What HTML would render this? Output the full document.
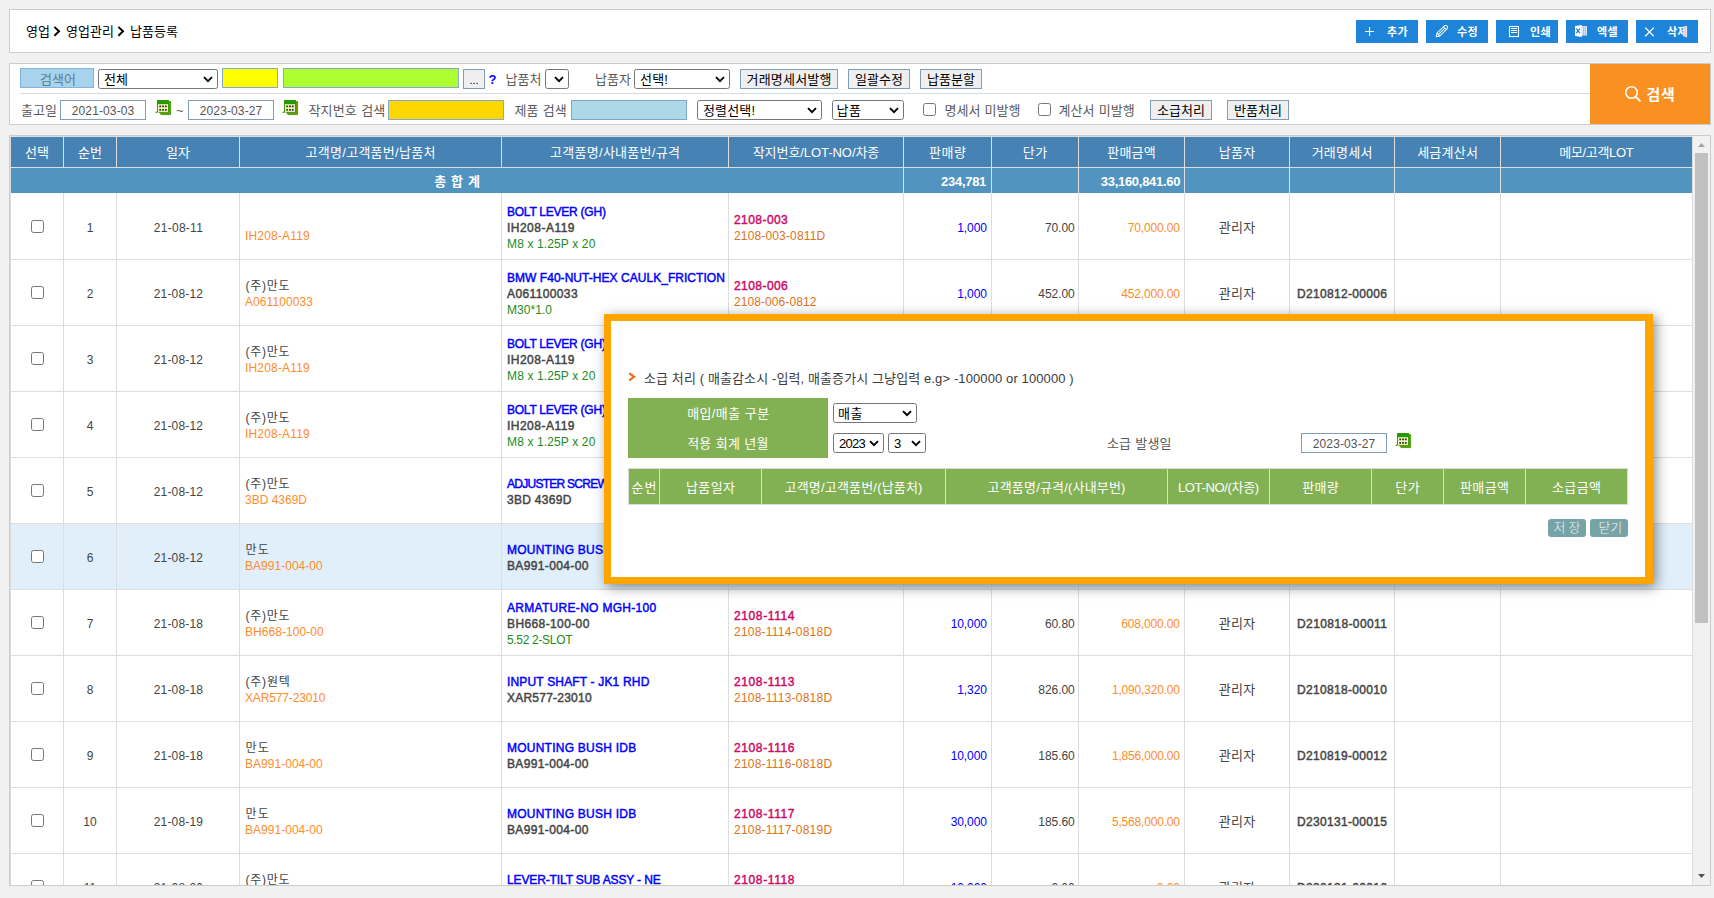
<!DOCTYPE html><html lang="ko"><head><meta charset="utf-8"><title>납품등록</title><style>
*{box-sizing:border-box;margin:0;padding:0}
html,body{width:1714px;height:898px;overflow:hidden}
body{background:#f1f1f1;font-family:"Liberation Sans","Noto Sans CJK KR",sans-serif;font-size:12px;color:#333;position:relative}
.abs{position:absolute}
.panel{position:absolute;background:#fff;border:1px solid #ccc}
.t{position:absolute;white-space:nowrap;line-height:16px}
.t i{font-style:normal;display:inline-block;white-space:nowrap}
.bc{font-size:13px;color:#000}
.tb{position:absolute;top:20px;width:62px;height:23px;background:#1d84d9}
.tbt{color:#fff;font-size:11px;font-weight:bold}
.lbl{font-size:13px;color:#5a5a5a;word-spacing:0.4px}
.inp{position:absolute;height:20px;border:1px solid #7f9db9;background:#fff}
.inpt{font-size:12px;color:#555}
.sel{position:absolute;height:20px;border:1px solid #767676;border-radius:2.5px;background:#fff}
.selt{font-size:13px;color:#000}
.btn{position:absolute;height:20px;border:1px solid #7f9db9;background:#efefef}
.btnt{font-size:13px;color:#000}
.cb{position:absolute;width:13px;height:13px;border:1px solid #767676;border-radius:2.5px;background:#fff}
.th{position:absolute;top:137px;height:30px;background:#4682b4}
.tht{color:#fff;font-size:13px}
.tt{position:absolute;top:168px;height:25px;background:#5294c0}
.ttt{color:#fff;font-size:13px;font-weight:bold;word-spacing:1px}
.vl{position:absolute;width:1px;background:#ddd}
.hl{position:absolute;height:1px;background:#ddd}
.c{font-size:12px;color:#444}
.org{color:#ff8c2a}
.blu{color:#0000ff}
.bb{color:#0000ff;-webkit-text-stroke:0.45px #0000ff}
.dk{color:#444;-webkit-text-stroke:0.45px #444}
.grn{color:#228b22}
.lot{color:#cc0a66;-webkit-text-stroke:0.45px #cc0a66}
.lot2{color:#e0701c}
.gth{position:absolute;background:#82b154}
.gtt{color:#fff;font-size:13px;word-spacing:0.4px}
.mb{position:absolute;top:519px;height:18px;width:38px;background:#76a3a6;border-radius:3px}
.mbt{color:#eef5f5;font-size:13px;font-weight:300}
</style></head><body>
<div class="panel" style="left:9px;top:9px;width:1702px;height:44px"></div>
<div class="t bc" style="left:26px;top:24px;"><i style="letter-spacing:-0.01px;">영업</i></div>
<div class="t bc" style="left:66px;top:24px;"><i style="letter-spacing:0.01px;">영업관리</i></div>
<div class="t bc" style="left:130px;top:24px;"><i style="letter-spacing:0.01px;">납품등록</i></div>
<svg class="abs" style="left:53px;top:26px" width="8" height="11" viewBox="0 0 8 11"><path d="M1.4 0.9 L6 5.3 L1.4 9.7" fill="none" stroke="#000" stroke-width="2"/></svg>
<svg class="abs" style="left:117px;top:26px" width="8" height="11" viewBox="0 0 8 11"><path d="M1.4 0.9 L6 5.3 L1.4 9.7" fill="none" stroke="#000" stroke-width="2"/></svg>
<div class="tb" style="left:1356px"><svg class="abs" style="left:8px;top:6px" width="12" height="12" viewBox="0 0 12 12"><path d="M5.6 1v9M1.1 5.5h9" stroke="#fff" stroke-width="1.1" fill="none"/></svg></div>
<div class="t tbt" style="left:1387px;top:24px;"><i style="letter-spacing:0.32px;">추가</i></div>
<div class="tb" style="left:1426px"><svg class="abs" style="left:9px;top:5px" width="13" height="13" viewBox="0 0 13 13"><g transform="translate(6.6,6.4) rotate(-44.5)" fill="none" stroke="#fff" stroke-width="0.95"><path d="M-7.6 0 L-4.6 -2 H5.6 a2 2 0 0 1 0 4 H-4.6 Z"/><path d="M-4.6 0 H5.2M-4.6 -2 V2M4.6 -2 V2"/></g></svg></div>
<div class="t tbt" style="left:1457px;top:24px;"><i style="letter-spacing:0.32px;">수정</i></div>
<div class="tb" style="left:1496px"><svg class="abs" style="left:12px;top:5px" width="12" height="13" viewBox="0 0 12 13"><rect x="1.5" y="1.5" width="9" height="10" stroke="#fff" stroke-width="1.1" fill="none"/><path d="M3 3.5h6M3 5.5h6M3 7.5h6" stroke="#fff" stroke-width="1"/></svg></div>
<div class="t tbt" style="left:1530px;top:24px;"><i style="letter-spacing:0.32px;">인쇄</i></div>
<div class="tb" style="left:1566px"><svg class="abs" style="left:8px;top:5px" width="14" height="13" viewBox="0 0 14 13"><rect x="7.5" y="1" width="5.5" height="9.5" fill="#d9e8f9"/><path d="M9.6 1.5v8.5M11.3 1.5v8.5" stroke="#8fbcec" stroke-width="0.8"/><path d="M1 1.1 L7.8 0 V12.1 L1 11 Z" fill="#fff"/><path d="M2.3 3.7 L5.9 8.1 M5.9 3.7 L2.3 8.1" stroke="#1d84d9" stroke-width="1.3"/></svg></div>
<div class="t tbt" style="left:1597px;top:24px;"><i style="letter-spacing:0.32px;">엑셀</i></div>
<div class="tb" style="left:1636px"><svg class="abs" style="left:8px;top:6px" width="12" height="12" viewBox="0 0 12 12"><path d="M1.2 1.6 L9.8 10.2 M9.8 1.6 L1.2 10.2" stroke="#fff" stroke-width="1.3" fill="none"/></svg></div>
<div class="t tbt" style="left:1667px;top:24px;"><i style="letter-spacing:0.32px;">삭제</i></div>
<div class="panel" style="left:9px;top:63px;width:1702px;height:62px"></div>
<div class="abs" style="left:20px;top:93px;width:1570px;height:1px;background:#d3dbe3"></div>
<div class="abs" style="left:20px;top:68px;width:74px;height:20px;background:#a8d3ec;border:1px solid #86b3d9"></div>
<div class="t " style="left:40px;top:72px;font-size:13px;color:#5c7d97"><i style="letter-spacing:0.00px;">검색어</i></div>
<div class="sel" style="left:98px;top:69px;width:120px"><svg class="abs" style="right:4px;top:6px" width="10" height="7" viewBox="0 0 10 7"><path d="M1 1.2 L5 5.2 L9 1.2" fill="none" stroke="#000" stroke-width="1.9"/></svg></div>
<div class="t selt" style="left:104px;top:72px;"><i style="letter-spacing:-0.01px;">전체</i></div>
<div class="inp" style="left:222px;top:68px;width:56px;background:#ffff00;border-color:#86a9d4"></div>
<div class="inp" style="left:283px;top:68px;width:176px;background:#adff2f;border-color:#86a9d4"></div>
<div class="btn" style="left:463px;top:69px;width:22px"></div>
<div class="t " style="left:274px;width:400px;text-align:center;top:72px;font-size:11px;color:#000"><i style="">...</i></div>
<div class="t " style="left:488.5px;top:72px;color:#0000ff;font-weight:bold;font-size:13px"><i style="">?</i></div>
<div class="t lbl" style="left:505.5px;top:72px;"><i style="letter-spacing:0.00px;">납품처</i></div>
<div class="sel" style="left:545px;top:69px;width:24px"><svg class="abs" style="right:4px;top:6px" width="10" height="7" viewBox="0 0 10 7"><path d="M1 1.2 L5 5.2 L9 1.2" fill="none" stroke="#000" stroke-width="1.9"/></svg></div>
<div class="t lbl" style="left:595px;top:72px;"><i style="letter-spacing:0.00px;">납품자</i></div>
<div class="sel" style="left:634px;top:69px;width:96px"><svg class="abs" style="right:4px;top:6px" width="10" height="7" viewBox="0 0 10 7"><path d="M1 1.2 L5 5.2 L9 1.2" fill="none" stroke="#000" stroke-width="1.9"/></svg></div>
<div class="t selt" style="left:640px;top:72px;"><i style="letter-spacing:0.17px;">선택!</i></div>
<div class="btn" style="left:740px;top:69px;width:98px"></div>
<div class="t btnt" style="left:589px;width:400px;text-align:center;top:72px;"><i style="letter-spacing:0.17px;margin-right:-0.17px;">거래명세서발행</i></div>
<div class="btn" style="left:848px;top:69px;width:62px"></div>
<div class="t btnt" style="left:679px;width:400px;text-align:center;top:72px;"><i style="letter-spacing:0.01px;margin-right:-0.01px;">일괄수정</i></div>
<div class="btn" style="left:920px;top:69px;width:62px"></div>
<div class="t btnt" style="left:751px;width:400px;text-align:center;top:72px;"><i style="letter-spacing:0.01px;margin-right:-0.01px;">납품분할</i></div>
<div class="t lbl" style="left:21px;top:103px;"><i style="letter-spacing:0.00px;">출고일</i></div>
<div class="inp" style="left:60px;top:100px;width:86px"></div>
<div class="t inpt" style="left:-97px;width:400px;text-align:center;top:103px;"><i style="letter-spacing:0.12px;margin-right:-0.12px;">2021-03-03</i></div>
<svg class="abs" style="left:155px;top:100px" width="17" height="16" viewBox="0 0 17 16"><path d="M4.6 12.6 H13.8 V1.6 H15.6 V14.6 H6 Z" fill="#7b9016" stroke="#3f9a04" stroke-width="0.9"/><rect x="2" y="0" width="12" height="12.4" fill="#3f9a04"/><rect x="2.7" y="0.7" width="10.6" height="3.4" fill="#219a06"/><rect x="3" y="4.2" width="10" height="7.7" fill="#f1f4c6"/><path d="M4.3 5.4h1.8v1.8h-1.8zM7.1 5.4h1.8v1.8h-1.8zM9.9 5.4h1.8v1.8h-1.8zM4.3 9h1.8v1.8h-1.8zM7.1 9h1.8v1.8h-1.8zM9.9 9h1.8v1.8h-1.8z" fill="#2c3d02"/><path d="M0 12.7 L2.2 11 V13 Z" fill="#3f9a04"/></svg>
<div class="t lbl" style="left:176px;top:103px;"><i style="">~</i></div>
<div class="inp" style="left:188px;top:100px;width:86px"></div>
<div class="t inpt" style="left:31px;width:400px;text-align:center;top:103px;"><i style="letter-spacing:0.12px;margin-right:-0.12px;">2023-03-27</i></div>
<svg class="abs" style="left:282px;top:100px" width="17" height="16" viewBox="0 0 17 16"><path d="M4.6 12.6 H13.8 V1.6 H15.6 V14.6 H6 Z" fill="#7b9016" stroke="#3f9a04" stroke-width="0.9"/><rect x="2" y="0" width="12" height="12.4" fill="#3f9a04"/><rect x="2.7" y="0.7" width="10.6" height="3.4" fill="#219a06"/><rect x="3" y="4.2" width="10" height="7.7" fill="#f1f4c6"/><path d="M4.3 5.4h1.8v1.8h-1.8zM7.1 5.4h1.8v1.8h-1.8zM9.9 5.4h1.8v1.8h-1.8zM4.3 9h1.8v1.8h-1.8zM7.1 9h1.8v1.8h-1.8zM9.9 9h1.8v1.8h-1.8z" fill="#2c3d02"/><path d="M0 12.7 L2.2 11 V13 Z" fill="#3f9a04"/></svg>
<div class="t lbl" style="left:308.5px;top:103px;"><i style="letter-spacing:0.16px;">작지번호 검색</i></div>
<div class="inp" style="left:388px;top:100px;width:116px;background:#ffd700;border-color:#86a9d4"></div>
<div class="t lbl" style="left:514.5px;top:103px;"><i style="letter-spacing:0.09px;">제품 검색</i></div>
<div class="inp" style="left:571px;top:100px;width:116px;background:#add8e6;border-color:#7ba7cf"></div>
<div class="sel" style="left:697px;top:100px;width:125px"><svg class="abs" style="right:4px;top:6px" width="10" height="7" viewBox="0 0 10 7"><path d="M1 1.2 L5 5.2 L9 1.2" fill="none" stroke="#000" stroke-width="1.9"/></svg></div>
<div class="t selt" style="left:703px;top:103px;"><i style="letter-spacing:0.14px;">정렬선택!</i></div>
<div class="sel" style="left:832px;top:100px;width:72px"><svg class="abs" style="right:4px;top:6px" width="10" height="7" viewBox="0 0 10 7"><path d="M1 1.2 L5 5.2 L9 1.2" fill="none" stroke="#000" stroke-width="1.9"/></svg></div>
<div class="t selt" style="left:836.5px;top:103px;"><i style="letter-spacing:0.49px;">납품</i></div>
<div class="cb" style="left:923px;top:103px"></div>
<div class="t lbl" style="left:944.5px;top:103px;"><i style="letter-spacing:0.02px;">명세서 미발행</i></div>
<div class="cb" style="left:1038px;top:103px"></div>
<div class="t lbl" style="left:1058.5px;top:103px;"><i style="letter-spacing:0.09px;">계산서 미발행</i></div>
<div class="btn" style="left:1150px;top:100px;width:62px"></div>
<div class="t btnt" style="left:981px;width:400px;text-align:center;top:103px;"><i style="letter-spacing:0.01px;margin-right:-0.01px;">소급처리</i></div>
<div class="btn" style="left:1227px;top:100px;width:62px"></div>
<div class="t btnt" style="left:1058px;width:400px;text-align:center;top:103px;"><i style="letter-spacing:0.01px;margin-right:-0.01px;">반품처리</i></div>
<div class="abs" style="left:1590px;top:64px;width:120px;height:60px;background:#f89022"></div>
<svg class="abs" style="left:1624px;top:85px" width="18" height="18" viewBox="0 0 18 18"><circle cx="7.5" cy="7.5" r="5.8" fill="none" stroke="#fff" stroke-width="1.5"/><path d="M11.6 11.6 L16.4 16.4" stroke="#fff" stroke-width="1.7"/></svg>
<div class="t " style="left:1646.5px;top:85px;color:#fff;font-size:15px;font-weight:bold;line-height:20px"><i style="letter-spacing:0.65px;">검색</i></div>
<div class="panel" style="left:9px;top:135px;width:1702px;height:751px"></div>
<div class="abs" style="left:10px;top:136px;width:1683px;height:749px;background:#ddd"></div>
<div class="abs" style="left:11px;top:137px;width:1681px;height:748px;background:#fff"></div>
<div class="abs" style="left:1693px;top:136px;width:17px;height:749px;background:#f1f1f1"></div>
<div class="abs" style="left:1695px;top:153px;width:13px;height:470px;background:#c1c1c1"></div>
<svg class="abs" style="left:1698px;top:143px" width="7" height="4" viewBox="0 0 7 4"><path d="M0 4 L3.5 0 L7 4Z" fill="#a3a3a3"/></svg>
<svg class="abs" style="left:1698px;top:874px" width="7" height="4" viewBox="0 0 7 4"><path d="M0 0 L3.5 4 L7 0Z" fill="#505050"/></svg>
<div class="th" style="left:11px;width:52px"></div>
<div class="t tht" style="left:-163px;width:400px;text-align:center;top:145px;"><i style="letter-spacing:-0.01px;margin-right:0.01px;">선택</i></div>
<div class="th" style="left:64px;width:52px"></div>
<div class="t tht" style="left:-110px;width:400px;text-align:center;top:145px;"><i style="letter-spacing:-0.01px;margin-right:0.01px;">순번</i></div>
<div class="th" style="left:117px;width:122px"></div>
<div class="t tht" style="left:-22px;width:400px;text-align:center;top:145px;"><i style="letter-spacing:-0.01px;margin-right:0.01px;">일자</i></div>
<div class="th" style="left:240px;width:261px"></div>
<div class="t tht" style="left:170.5px;width:400px;text-align:center;top:145px;"><i style="letter-spacing:0.28px;margin-right:-0.28px;">고객명/고객품번/납품처</i></div>
<div class="th" style="left:502px;width:226px"></div>
<div class="t tht" style="left:415px;width:400px;text-align:center;top:145px;"><i style="letter-spacing:0.28px;margin-right:-0.28px;">고객품명/사내품번/규격</i></div>
<div class="th" style="left:729px;width:174px"></div>
<div class="t tht" style="left:616px;width:400px;text-align:center;top:145px;"><i style="letter-spacing:-0.06px;margin-right:0.06px;">작지번호/LOT-NO/차종</i></div>
<div class="th" style="left:904px;width:87px"></div>
<div class="t tht" style="left:747.5px;width:400px;text-align:center;top:145px;"><i style="letter-spacing:0.54px;margin-right:-0.54px;">판매량</i></div>
<div class="th" style="left:992px;width:86px"></div>
<div class="t tht" style="left:835px;width:400px;text-align:center;top:145px;"><i style="letter-spacing:0.49px;margin-right:-0.49px;">단가</i></div>
<div class="th" style="left:1079px;width:105px"></div>
<div class="t tht" style="left:931.5px;width:400px;text-align:center;top:145px;"><i style="letter-spacing:0.14px;margin-right:-0.14px;">판매금액</i></div>
<div class="th" style="left:1185px;width:104px"></div>
<div class="t tht" style="left:1037px;width:400px;text-align:center;top:145px;"><i style="letter-spacing:0.34px;margin-right:-0.34px;">납품자</i></div>
<div class="th" style="left:1290px;width:104px"></div>
<div class="t tht" style="left:1142px;width:400px;text-align:center;top:145px;"><i style="letter-spacing:0.22px;margin-right:-0.22px;">거래명세서</i></div>
<div class="th" style="left:1395px;width:105px"></div>
<div class="t tht" style="left:1247.5px;width:400px;text-align:center;top:145px;"><i style="letter-spacing:0.22px;margin-right:-0.22px;">세금계산서</i></div>
<div class="th" style="left:1501px;width:191px"></div>
<div class="t tht" style="left:1396.5px;width:400px;text-align:center;top:145px;"><i style="letter-spacing:-0.32px;margin-right:0.32px;">메모/고객LOT</i></div>
<div class="tt" style="left:11px;width:892px"></div>
<div class="tt" style="left:904px;width:87px"></div>
<div class="tt" style="left:992px;width:86px"></div>
<div class="tt" style="left:1079px;width:105px"></div>
<div class="tt" style="left:1185px;width:104px"></div>
<div class="tt" style="left:1290px;width:104px"></div>
<div class="tt" style="left:1395px;width:105px"></div>
<div class="tt" style="left:1501px;width:191px"></div>
<div class="t ttt" style="left:257px;width:400px;text-align:center;top:174px;"><i style="letter-spacing:0.16px;margin-right:-0.16px;">총 합 계</i></div>
<div class="t ttt" style="right:727.7px;text-align:right;top:174px;"><i style="letter-spacing:-0.29px;margin-right:0.29px;">234,781</i></div>
<div class="t ttt" style="right:533.5px;text-align:right;top:174px;"><i style="letter-spacing:-0.28px;margin-right:0.28px;">33,160,841.60</i></div>
<div class="abs" style="left:0;top:0;width:1714px;height:885px;overflow:hidden">
<div class="hl" style="left:11px;width:1681px;top:259px"></div>
<div class="cb" style="left:31px;top:220px"></div>
<div class="t c" style="left:-110px;width:400px;text-align:center;top:220px;"><i style="">1</i></div>
<div class="t c" style="left:-21.7px;width:400px;text-align:center;top:220px;"><i style="letter-spacing:0.28px;margin-right:-0.28px;">21-08-11</i></div>
<div class="t c org" style="left:245px;top:228px;"><i style="letter-spacing:0.18px;">IH208-A119</i></div>
<div class="t c bb" style="left:507px;top:204px;"><i style="letter-spacing:-0.24px;">BOLT LEVER (GH)</i></div>
<div class="t c dk" style="left:507px;top:220px;"><i style="letter-spacing:0.48px;">IH208-A119</i></div>
<div class="t c grn" style="left:507px;top:236px;"><i style="letter-spacing:0.13px;">M8 x 1.25P x 20</i></div>
<div class="t c lot" style="left:734px;top:212px;"><i style="letter-spacing:0.44px;">2108-003</i></div>
<div class="t c lot2" style="left:734px;top:228px;"><i style="letter-spacing:0.15px;">2108-003-0811D</i></div>
<div class="t c blu" style="right:727px;text-align:right;top:220px;"><i style="letter-spacing:-0.05px;margin-right:0.05px;">1,000</i></div>
<div class="t c" style="right:639.3px;text-align:right;top:220px;"><i style="letter-spacing:-0.05px;margin-right:0.05px;">70.00</i></div>
<div class="t c org" style="right:534px;text-align:right;top:220px;"><i style="letter-spacing:-0.14px;margin-right:0.14px;">70,000.00</i></div>
<div class="t c" style="left:1037px;width:400px;text-align:center;top:220px;font-size:13px"><i style="letter-spacing:0.34px;margin-right:-0.34px;">관리자</i></div>
<div class="hl" style="left:11px;width:1681px;top:325px"></div>
<div class="cb" style="left:31px;top:286px"></div>
<div class="t c" style="left:-110px;width:400px;text-align:center;top:286px;"><i style="">2</i></div>
<div class="t c" style="left:-21.7px;width:400px;text-align:center;top:286px;"><i style="letter-spacing:0.17px;margin-right:-0.17px;">21-08-12</i></div>
<div class="t c" style="left:245.5px;top:278px;"><i style="letter-spacing:0.72px;">(주)만도</i></div>
<div class="t c org" style="left:245px;top:294px;"><i style="letter-spacing:0.08px;">A061100033</i></div>
<div class="t c bb" style="left:507px;top:270px;"><i style="letter-spacing:0.04px;">BMW F40-NUT-HEX CAULK_FRICTION</i></div>
<div class="t c dk" style="left:507px;top:286px;"><i style="letter-spacing:0.38px;">A061100033</i></div>
<div class="t c grn" style="left:507px;top:302px;"><i style="letter-spacing:0.04px;">M30*1.0</i></div>
<div class="t c lot" style="left:734px;top:278px;"><i style="letter-spacing:0.44px;">2108-006</i></div>
<div class="t c lot2" style="left:734px;top:294px;"><i style="letter-spacing:0.08px;">2108-006-0812</i></div>
<div class="t c blu" style="right:727px;text-align:right;top:286px;"><i style="letter-spacing:-0.05px;margin-right:0.05px;">1,000</i></div>
<div class="t c" style="right:639.3px;text-align:right;top:286px;"><i style="letter-spacing:-0.07px;margin-right:0.07px;">452.00</i></div>
<div class="t c org" style="right:534px;text-align:right;top:286px;"><i style="letter-spacing:-0.15px;margin-right:0.15px;">452,000.00</i></div>
<div class="t c" style="left:1037px;width:400px;text-align:center;top:286px;font-size:13px"><i style="letter-spacing:0.34px;margin-right:-0.34px;">관리자</i></div>
<div class="t c dk" style="left:1142px;width:400px;text-align:center;top:286px;"><i style="letter-spacing:0.32px;margin-right:-0.32px;">D210812-00006</i></div>
<div class="hl" style="left:11px;width:1681px;top:391px"></div>
<div class="cb" style="left:31px;top:352px"></div>
<div class="t c" style="left:-110px;width:400px;text-align:center;top:352px;"><i style="">3</i></div>
<div class="t c" style="left:-21.7px;width:400px;text-align:center;top:352px;"><i style="letter-spacing:0.17px;margin-right:-0.17px;">21-08-12</i></div>
<div class="t c" style="left:245.5px;top:344px;"><i style="letter-spacing:0.72px;">(주)만도</i></div>
<div class="t c org" style="left:245px;top:360px;"><i style="letter-spacing:0.18px;">IH208-A119</i></div>
<div class="t c bb" style="left:507px;top:336px;"><i style="letter-spacing:-0.24px;">BOLT LEVER (GH)</i></div>
<div class="t c dk" style="left:507px;top:352px;"><i style="letter-spacing:0.48px;">IH208-A119</i></div>
<div class="t c grn" style="left:507px;top:368px;"><i style="letter-spacing:0.13px;">M8 x 1.25P x 20</i></div>
<div class="t c lot" style="left:734px;top:344px;"><i style="letter-spacing:0.44px;">2108-007</i></div>
<div class="t c lot2" style="left:734px;top:360px;"><i style="letter-spacing:0.08px;">2108-007-0812</i></div>
<div class="t c blu" style="right:727px;text-align:right;top:352px;"><i style="letter-spacing:-0.05px;margin-right:0.05px;">1,000</i></div>
<div class="t c" style="right:639.3px;text-align:right;top:352px;"><i style="letter-spacing:-0.05px;margin-right:0.05px;">70.00</i></div>
<div class="t c org" style="right:534px;text-align:right;top:352px;"><i style="letter-spacing:-0.14px;margin-right:0.14px;">70,000.00</i></div>
<div class="t c" style="left:1037px;width:400px;text-align:center;top:352px;font-size:13px"><i style="letter-spacing:0.34px;margin-right:-0.34px;">관리자</i></div>
<div class="t c dk" style="left:1142px;width:400px;text-align:center;top:352px;"><i style="letter-spacing:0.32px;margin-right:-0.32px;">D210812-00007</i></div>
<div class="hl" style="left:11px;width:1681px;top:457px"></div>
<div class="cb" style="left:31px;top:418px"></div>
<div class="t c" style="left:-110px;width:400px;text-align:center;top:418px;"><i style="">4</i></div>
<div class="t c" style="left:-21.7px;width:400px;text-align:center;top:418px;"><i style="letter-spacing:0.17px;margin-right:-0.17px;">21-08-12</i></div>
<div class="t c" style="left:245.5px;top:410px;"><i style="letter-spacing:0.72px;">(주)만도</i></div>
<div class="t c org" style="left:245px;top:426px;"><i style="letter-spacing:0.18px;">IH208-A119</i></div>
<div class="t c bb" style="left:507px;top:402px;"><i style="letter-spacing:-0.24px;">BOLT LEVER (GH)</i></div>
<div class="t c dk" style="left:507px;top:418px;"><i style="letter-spacing:0.48px;">IH208-A119</i></div>
<div class="t c grn" style="left:507px;top:434px;"><i style="letter-spacing:0.13px;">M8 x 1.25P x 20</i></div>
<div class="t c lot" style="left:734px;top:410px;"><i style="letter-spacing:0.44px;">2108-008</i></div>
<div class="t c lot2" style="left:734px;top:426px;"><i style="letter-spacing:0.08px;">2108-008-0812</i></div>
<div class="t c blu" style="right:727px;text-align:right;top:418px;"><i style="letter-spacing:-0.05px;margin-right:0.05px;">1,000</i></div>
<div class="t c" style="right:639.3px;text-align:right;top:418px;"><i style="letter-spacing:-0.05px;margin-right:0.05px;">70.00</i></div>
<div class="t c org" style="right:534px;text-align:right;top:418px;"><i style="letter-spacing:-0.14px;margin-right:0.14px;">70,000.00</i></div>
<div class="t c" style="left:1037px;width:400px;text-align:center;top:418px;font-size:13px"><i style="letter-spacing:0.34px;margin-right:-0.34px;">관리자</i></div>
<div class="t c dk" style="left:1142px;width:400px;text-align:center;top:418px;"><i style="letter-spacing:0.32px;margin-right:-0.32px;">D210812-00008</i></div>
<div class="hl" style="left:11px;width:1681px;top:523px"></div>
<div class="cb" style="left:31px;top:484px"></div>
<div class="t c" style="left:-110px;width:400px;text-align:center;top:484px;"><i style="">5</i></div>
<div class="t c" style="left:-21.7px;width:400px;text-align:center;top:484px;"><i style="letter-spacing:0.17px;margin-right:-0.17px;">21-08-12</i></div>
<div class="t c" style="left:245.5px;top:476px;"><i style="letter-spacing:0.72px;">(주)만도</i></div>
<div class="t c org" style="left:245px;top:492px;"><i style="letter-spacing:-0.01px;">3BD 4369D</i></div>
<div class="t c bb" style="left:507px;top:476px;"><i style="letter-spacing:-0.74px;">ADJUSTER SCREW</i></div>
<div class="t c dk" style="left:507px;top:492px;"><i style="letter-spacing:0.29px;">3BD 4369D</i></div>
<div class="t c lot" style="left:734px;top:476px;"><i style="letter-spacing:0.44px;">2108-009</i></div>
<div class="t c lot2" style="left:734px;top:492px;"><i style="letter-spacing:0.08px;">2108-009-0812</i></div>
<div class="t c blu" style="right:727px;text-align:right;top:484px;"><i style="letter-spacing:-0.05px;margin-right:0.05px;">5,000</i></div>
<div class="t c" style="right:639.3px;text-align:right;top:484px;"><i style="letter-spacing:-0.07px;margin-right:0.07px;">120.00</i></div>
<div class="t c org" style="right:534px;text-align:right;top:484px;"><i style="letter-spacing:-0.15px;margin-right:0.15px;">600,000.00</i></div>
<div class="t c" style="left:1037px;width:400px;text-align:center;top:484px;font-size:13px"><i style="letter-spacing:0.34px;margin-right:-0.34px;">관리자</i></div>
<div class="t c dk" style="left:1142px;width:400px;text-align:center;top:484px;"><i style="letter-spacing:0.32px;margin-right:-0.32px;">D210812-00009</i></div>
<div class="abs" style="left:11px;top:524px;width:1681px;height:65px;background:#e1effa"></div>
<div class="hl" style="left:11px;width:1681px;top:589px"></div>
<div class="cb" style="left:31px;top:550px"></div>
<div class="t c" style="left:-110px;width:400px;text-align:center;top:550px;"><i style="">6</i></div>
<div class="t c" style="left:-21.7px;width:400px;text-align:center;top:550px;"><i style="letter-spacing:0.17px;margin-right:-0.17px;">21-08-12</i></div>
<div class="t c" style="left:245.5px;top:542px;"><i style="letter-spacing:1.15px;">만도</i></div>
<div class="t c org" style="left:245px;top:558px;"><i style="letter-spacing:0.03px;">BA991-004-00</i></div>
<div class="t c bb" style="left:507px;top:542px;"><i style="letter-spacing:0.24px;">MOUNTING BUSH IDB</i></div>
<div class="t c dk" style="left:507px;top:558px;"><i style="letter-spacing:0.36px;">BA991-004-00</i></div>
<div class="t c lot" style="left:734px;top:542px;"><i style="letter-spacing:0.44px;">2108-010</i></div>
<div class="t c lot2" style="left:734px;top:558px;"><i style="letter-spacing:0.08px;">2108-010-0812</i></div>
<div class="t c blu" style="right:727px;text-align:right;top:550px;"><i style="letter-spacing:-0.07px;margin-right:0.07px;">10,000</i></div>
<div class="t c" style="right:639.3px;text-align:right;top:550px;"><i style="letter-spacing:-0.07px;margin-right:0.07px;">185.60</i></div>
<div class="t c org" style="right:534px;text-align:right;top:550px;"><i style="letter-spacing:-0.18px;margin-right:0.18px;">1,856,000.00</i></div>
<div class="t c" style="left:1037px;width:400px;text-align:center;top:550px;font-size:13px"><i style="letter-spacing:0.34px;margin-right:-0.34px;">관리자</i></div>
<div class="t c dk" style="left:1142px;width:400px;text-align:center;top:550px;"><i style="letter-spacing:0.32px;margin-right:-0.32px;">D210812-00010</i></div>
<div class="hl" style="left:11px;width:1681px;top:655px"></div>
<div class="cb" style="left:31px;top:616px"></div>
<div class="t c" style="left:-110px;width:400px;text-align:center;top:616px;"><i style="">7</i></div>
<div class="t c" style="left:-21.7px;width:400px;text-align:center;top:616px;"><i style="letter-spacing:0.17px;margin-right:-0.17px;">21-08-18</i></div>
<div class="t c" style="left:245.5px;top:608px;"><i style="letter-spacing:0.72px;">(주)만도</i></div>
<div class="t c org" style="left:245px;top:624px;"><i style="letter-spacing:0.06px;">BH668-100-00</i></div>
<div class="t c bb" style="left:507px;top:600px;"><i style="letter-spacing:0.30px;">ARMATURE-NO MGH-100</i></div>
<div class="t c dk" style="left:507px;top:616px;"><i style="letter-spacing:0.39px;">BH668-100-00</i></div>
<div class="t c grn" style="left:507px;top:632px;"><i style="letter-spacing:-0.32px;">5.52 2-SLOT</i></div>
<div class="t c lot" style="left:734px;top:608px;"><i style="letter-spacing:0.61px;">2108-1114</i></div>
<div class="t c lot2" style="left:734px;top:624px;"><i style="letter-spacing:0.22px;">2108-1114-0818D</i></div>
<div class="t c blu" style="right:727px;text-align:right;top:616px;"><i style="letter-spacing:-0.07px;margin-right:0.07px;">10,000</i></div>
<div class="t c" style="right:639.3px;text-align:right;top:616px;"><i style="letter-spacing:-0.05px;margin-right:0.05px;">60.80</i></div>
<div class="t c org" style="right:534px;text-align:right;top:616px;"><i style="letter-spacing:-0.15px;margin-right:0.15px;">608,000.00</i></div>
<div class="t c" style="left:1037px;width:400px;text-align:center;top:616px;font-size:13px"><i style="letter-spacing:0.34px;margin-right:-0.34px;">관리자</i></div>
<div class="t c dk" style="left:1142px;width:400px;text-align:center;top:616px;"><i style="letter-spacing:0.39px;margin-right:-0.39px;">D210818-00011</i></div>
<div class="hl" style="left:11px;width:1681px;top:721px"></div>
<div class="cb" style="left:31px;top:682px"></div>
<div class="t c" style="left:-110px;width:400px;text-align:center;top:682px;"><i style="">8</i></div>
<div class="t c" style="left:-21.7px;width:400px;text-align:center;top:682px;"><i style="letter-spacing:0.17px;margin-right:-0.17px;">21-08-18</i></div>
<div class="t c" style="left:245.5px;top:674px;"><i style="letter-spacing:0.79px;">(주)원텍</i></div>
<div class="t c org" style="left:245px;top:690px;"><i style="letter-spacing:-0.15px;">XAR577-23010</i></div>
<div class="t c bb" style="left:507px;top:674px;"><i style="letter-spacing:0.17px;">INPUT SHAFT - JK1 RHD</i></div>
<div class="t c dk" style="left:507px;top:690px;"><i style="letter-spacing:0.23px;">XAR577-23010</i></div>
<div class="t c lot" style="left:734px;top:674px;"><i style="letter-spacing:0.61px;">2108-1113</i></div>
<div class="t c lot2" style="left:734px;top:690px;"><i style="letter-spacing:0.22px;">2108-1113-0818D</i></div>
<div class="t c blu" style="right:727px;text-align:right;top:682px;"><i style="letter-spacing:-0.05px;margin-right:0.05px;">1,320</i></div>
<div class="t c" style="right:639.3px;text-align:right;top:682px;"><i style="letter-spacing:-0.07px;margin-right:0.07px;">826.00</i></div>
<div class="t c org" style="right:534px;text-align:right;top:682px;"><i style="letter-spacing:-0.18px;margin-right:0.18px;">1,090,320.00</i></div>
<div class="t c" style="left:1037px;width:400px;text-align:center;top:682px;font-size:13px"><i style="letter-spacing:0.34px;margin-right:-0.34px;">관리자</i></div>
<div class="t c dk" style="left:1142px;width:400px;text-align:center;top:682px;"><i style="letter-spacing:0.32px;margin-right:-0.32px;">D210818-00010</i></div>
<div class="hl" style="left:11px;width:1681px;top:787px"></div>
<div class="cb" style="left:31px;top:748px"></div>
<div class="t c" style="left:-110px;width:400px;text-align:center;top:748px;"><i style="">9</i></div>
<div class="t c" style="left:-21.7px;width:400px;text-align:center;top:748px;"><i style="letter-spacing:0.17px;margin-right:-0.17px;">21-08-18</i></div>
<div class="t c" style="left:245.5px;top:740px;"><i style="letter-spacing:1.15px;">만도</i></div>
<div class="t c org" style="left:245px;top:756px;"><i style="letter-spacing:0.03px;">BA991-004-00</i></div>
<div class="t c bb" style="left:507px;top:740px;"><i style="letter-spacing:0.24px;">MOUNTING BUSH IDB</i></div>
<div class="t c dk" style="left:507px;top:756px;"><i style="letter-spacing:0.36px;">BA991-004-00</i></div>
<div class="t c lot" style="left:734px;top:740px;"><i style="letter-spacing:0.61px;">2108-1116</i></div>
<div class="t c lot2" style="left:734px;top:756px;"><i style="letter-spacing:0.22px;">2108-1116-0818D</i></div>
<div class="t c blu" style="right:727px;text-align:right;top:748px;"><i style="letter-spacing:-0.07px;margin-right:0.07px;">10,000</i></div>
<div class="t c" style="right:639.3px;text-align:right;top:748px;"><i style="letter-spacing:-0.07px;margin-right:0.07px;">185.60</i></div>
<div class="t c org" style="right:534px;text-align:right;top:748px;"><i style="letter-spacing:-0.18px;margin-right:0.18px;">1,856,000.00</i></div>
<div class="t c" style="left:1037px;width:400px;text-align:center;top:748px;font-size:13px"><i style="letter-spacing:0.34px;margin-right:-0.34px;">관리자</i></div>
<div class="t c dk" style="left:1142px;width:400px;text-align:center;top:748px;"><i style="letter-spacing:0.32px;margin-right:-0.32px;">D210819-00012</i></div>
<div class="hl" style="left:11px;width:1681px;top:853px"></div>
<div class="cb" style="left:31px;top:814px"></div>
<div class="t c" style="left:-110px;width:400px;text-align:center;top:814px;"><i style="">10</i></div>
<div class="t c" style="left:-21.7px;width:400px;text-align:center;top:814px;"><i style="letter-spacing:0.17px;margin-right:-0.17px;">21-08-19</i></div>
<div class="t c" style="left:245.5px;top:806px;"><i style="letter-spacing:1.15px;">만도</i></div>
<div class="t c org" style="left:245px;top:822px;"><i style="letter-spacing:0.03px;">BA991-004-00</i></div>
<div class="t c bb" style="left:507px;top:806px;"><i style="letter-spacing:0.24px;">MOUNTING BUSH IDB</i></div>
<div class="t c dk" style="left:507px;top:822px;"><i style="letter-spacing:0.36px;">BA991-004-00</i></div>
<div class="t c lot" style="left:734px;top:806px;"><i style="letter-spacing:0.61px;">2108-1117</i></div>
<div class="t c lot2" style="left:734px;top:822px;"><i style="letter-spacing:0.22px;">2108-1117-0819D</i></div>
<div class="t c blu" style="right:727px;text-align:right;top:814px;"><i style="letter-spacing:-0.07px;margin-right:0.07px;">30,000</i></div>
<div class="t c" style="right:639.3px;text-align:right;top:814px;"><i style="letter-spacing:-0.07px;margin-right:0.07px;">185.60</i></div>
<div class="t c org" style="right:534px;text-align:right;top:814px;"><i style="letter-spacing:-0.18px;margin-right:0.18px;">5,568,000.00</i></div>
<div class="t c" style="left:1037px;width:400px;text-align:center;top:814px;font-size:13px"><i style="letter-spacing:0.34px;margin-right:-0.34px;">관리자</i></div>
<div class="t c dk" style="left:1142px;width:400px;text-align:center;top:814px;"><i style="letter-spacing:0.32px;margin-right:-0.32px;">D230131-00015</i></div>
<div class="hl" style="left:11px;width:1681px;top:919px"></div>
<div class="cb" style="left:31px;top:880px"></div>
<div class="t c" style="left:-110px;width:400px;text-align:center;top:880px;"><i style="">11</i></div>
<div class="t c" style="left:-21.7px;width:400px;text-align:center;top:880px;"><i style="letter-spacing:0.17px;margin-right:-0.17px;">21-08-20</i></div>
<div class="t c" style="left:245.5px;top:872px;"><i style="letter-spacing:0.72px;">(주)만도</i></div>
<div class="t c org" style="left:245px;top:888px;"><i style="">LT100-NE</i></div>
<div class="t c bb" style="left:507px;top:872px;"><i style="letter-spacing:-0.13px;">LEVER-TILT SUB ASSY - NE</i></div>
<div class="t c dk" style="left:507px;top:888px;"><i style="">LT100-NE</i></div>
<div class="t c lot" style="left:734px;top:872px;"><i style="letter-spacing:0.61px;">2108-1118</i></div>
<div class="t c lot2" style="left:734px;top:888px;"><i style="letter-spacing:0.22px;">2108-1118-0820D</i></div>
<div class="t c blu" style="right:727px;text-align:right;top:880px;"><i style="letter-spacing:-0.07px;margin-right:0.07px;">10,000</i></div>
<div class="t c" style="right:639.3px;text-align:right;top:880px;"><i style="letter-spacing:-0.01px;margin-right:0.01px;">0.00</i></div>
<div class="t c org" style="right:534px;text-align:right;top:880px;"><i style="letter-spacing:-0.01px;margin-right:0.01px;">0.00</i></div>
<div class="t c" style="left:1037px;width:400px;text-align:center;top:880px;font-size:13px"><i style="letter-spacing:0.34px;margin-right:-0.34px;">관리자</i></div>
<div class="t c dk" style="left:1142px;width:400px;text-align:center;top:880px;"><i style="letter-spacing:0.32px;margin-right:-0.32px;">D230131-00016</i></div>
<div class="vl" style="left:63px;top:193px;height:692px"></div>
<div class="vl" style="left:116px;top:193px;height:692px"></div>
<div class="vl" style="left:239px;top:193px;height:692px"></div>
<div class="vl" style="left:501px;top:193px;height:692px"></div>
<div class="vl" style="left:728px;top:193px;height:692px"></div>
<div class="vl" style="left:903px;top:193px;height:692px"></div>
<div class="vl" style="left:991px;top:193px;height:692px"></div>
<div class="vl" style="left:1078px;top:193px;height:692px"></div>
<div class="vl" style="left:1184px;top:193px;height:692px"></div>
<div class="vl" style="left:1289px;top:193px;height:692px"></div>
<div class="vl" style="left:1394px;top:193px;height:692px"></div>
<div class="vl" style="left:1500px;top:193px;height:692px"></div>
</div>
<div class="hl" style="left:11px;top:167px;width:1681px"></div>
<div class="vl" style="left:63px;top:137px;height:30px"></div>
<div class="vl" style="left:116px;top:137px;height:30px"></div>
<div class="vl" style="left:239px;top:137px;height:30px"></div>
<div class="vl" style="left:501px;top:137px;height:30px"></div>
<div class="vl" style="left:728px;top:137px;height:30px"></div>
<div class="vl" style="left:903px;top:137px;height:30px"></div>
<div class="vl" style="left:991px;top:137px;height:30px"></div>
<div class="vl" style="left:1078px;top:137px;height:30px"></div>
<div class="vl" style="left:1184px;top:137px;height:30px"></div>
<div class="vl" style="left:1289px;top:137px;height:30px"></div>
<div class="vl" style="left:1394px;top:137px;height:30px"></div>
<div class="vl" style="left:1500px;top:137px;height:30px"></div>
<div class="vl" style="left:903px;top:168px;height:25px"></div>
<div class="vl" style="left:991px;top:168px;height:25px"></div>
<div class="vl" style="left:1078px;top:168px;height:25px"></div>
<div class="vl" style="left:1184px;top:168px;height:25px"></div>
<div class="vl" style="left:1289px;top:168px;height:25px"></div>
<div class="vl" style="left:1394px;top:168px;height:25px"></div>
<div class="vl" style="left:1500px;top:168px;height:25px"></div>
<div class="abs" style="left:604px;top:314px;width:1049px;height:270px;background:#fff;border:7px solid #ffa500;border-right-width:8px;box-shadow:3px 3px 12px rgba(0,0,0,.45)"></div>
<svg class="abs" style="left:628px;top:372px" width="8" height="9" viewBox="0 0 8 9"><path d="M1.3 1.2 L6 4.8 L1.3 8.4" fill="none" stroke="#f26a1b" stroke-width="2.2"/></svg>
<div class="t " style="left:644px;top:371px;font-size:13px;color:#3c3c3c"><i style="letter-spacing:0.11px;">소급 처리 ( 매출감소시 -입력, 매출증가시 그냥입력 e.g&gt; -100000 or 100000 )</i></div>
<div class="gth" style="left:628px;top:398px;width:200px;height:60px"></div>
<div class="t gtt" style="left:528.2px;width:400px;text-align:center;top:406px;"><i style="letter-spacing:0.36px;margin-right:-0.36px;">매입/매출 구분</i></div>
<div class="t gtt" style="left:527.8px;width:400px;text-align:center;top:436px;"><i style="letter-spacing:0.20px;margin-right:-0.20px;">적용 회계 년월</i></div>
<div class="sel" style="left:833px;top:403px;width:84px"><svg class="abs" style="right:4px;top:6px" width="10" height="7" viewBox="0 0 10 7"><path d="M1 1.2 L5 5.2 L9 1.2" fill="none" stroke="#000" stroke-width="1.9"/></svg></div>
<div class="t selt" style="left:838px;top:406px;"><i style="letter-spacing:0.49px;">매출</i></div>
<div class="sel" style="left:833px;top:433px;width:51px"><svg class="abs" style="right:4px;top:6px" width="10" height="7" viewBox="0 0 10 7"><path d="M1 1.2 L5 5.2 L9 1.2" fill="none" stroke="#000" stroke-width="1.9"/></svg></div>
<div class="t selt" style="left:839px;top:436px;"><i style="letter-spacing:-0.73px;">2023</i></div>
<div class="sel" style="left:888px;top:433px;width:38px"><svg class="abs" style="right:4px;top:6px" width="10" height="7" viewBox="0 0 10 7"><path d="M1 1.2 L5 5.2 L9 1.2" fill="none" stroke="#000" stroke-width="1.9"/></svg></div>
<div class="t selt" style="left:894px;top:436px;"><i style="">3</i></div>
<div class="t lbl" style="left:1107px;top:436px;"><i style="letter-spacing:0.13px;">소급 발생일</i></div>
<div class="inp" style="left:1301px;top:433px;width:86px"></div>
<div class="t inpt" style="left:1144px;width:400px;text-align:center;top:436px;"><i style="letter-spacing:0.12px;margin-right:-0.12px;">2023-03-27</i></div>
<svg class="abs" style="left:1395px;top:433px" width="17" height="16" viewBox="0 0 17 16"><path d="M4.6 12.6 H13.8 V1.6 H15.6 V14.6 H6 Z" fill="#7b9016" stroke="#3f9a04" stroke-width="0.9"/><rect x="2" y="0" width="12" height="12.4" fill="#3f9a04"/><rect x="2.7" y="0.7" width="10.6" height="3.4" fill="#219a06"/><rect x="3" y="4.2" width="10" height="7.7" fill="#f1f4c6"/><path d="M4.3 5.4h1.8v1.8h-1.8zM7.1 5.4h1.8v1.8h-1.8zM9.9 5.4h1.8v1.8h-1.8zM4.3 9h1.8v1.8h-1.8zM7.1 9h1.8v1.8h-1.8zM9.9 9h1.8v1.8h-1.8z" fill="#2c3d02"/><path d="M0 12.7 L2.2 11 V13 Z" fill="#3f9a04"/></svg>
<div class="abs" style="left:628px;top:468px;width:1000px;height:37px;background:#dcdcdc"></div>
<div class="gth" style="left:629px;top:469px;width:30px;height:35px"></div>
<div class="t gtt" style="left:444px;width:400px;text-align:center;top:480px;"><i style="letter-spacing:0.84px;margin-right:-0.84px;">순번</i></div>
<div class="gth" style="left:660px;top:469px;width:101px;height:35px"></div>
<div class="t gtt" style="left:510.5px;width:400px;text-align:center;top:480px;"><i style="letter-spacing:0.34px;margin-right:-0.34px;">납품일자</i></div>
<div class="gth" style="left:762px;top:469px;width:183px;height:35px"></div>
<div class="t gtt" style="left:653.5px;width:400px;text-align:center;top:480px;"><i style="letter-spacing:0.18px;margin-right:-0.18px;">고객명/고객품번/(납품처)</i></div>
<div class="gth" style="left:946px;top:469px;width:221px;height:35px"></div>
<div class="t gtt" style="left:856.5px;width:400px;text-align:center;top:480px;"><i style="letter-spacing:0.18px;margin-right:-0.18px;">고객품명/규격/(사내부번)</i></div>
<div class="gth" style="left:1168px;top:469px;width:101px;height:35px"></div>
<div class="t gtt" style="left:1018.5px;width:400px;text-align:center;top:480px;"><i style="letter-spacing:-0.34px;margin-right:0.34px;">LOT-NO/(차종)</i></div>
<div class="gth" style="left:1270px;top:469px;width:101px;height:35px"></div>
<div class="t gtt" style="left:1120.5px;width:400px;text-align:center;top:480px;"><i style="letter-spacing:0.27px;margin-right:-0.27px;">판매량</i></div>
<div class="gth" style="left:1372px;top:469px;width:71px;height:35px"></div>
<div class="t gtt" style="left:1207.5px;width:400px;text-align:center;top:480px;"><i style="letter-spacing:0.54px;margin-right:-0.54px;">단가</i></div>
<div class="gth" style="left:1444px;top:469px;width:81px;height:35px"></div>
<div class="t gtt" style="left:1284.5px;width:400px;text-align:center;top:480px;"><i style="letter-spacing:0.34px;margin-right:-0.34px;">판매금액</i></div>
<div class="gth" style="left:1526px;top:469px;width:101px;height:35px"></div>
<div class="t gtt" style="left:1376.5px;width:400px;text-align:center;top:480px;"><i style="letter-spacing:0.44px;margin-right:-0.44px;">소급금액</i></div>
<div class="mb" style="left:1548px"></div>
<div class="t mbt" style="left:1367px;width:400px;text-align:center;top:520px;"><i style="letter-spacing:-0.22px;margin-right:0.22px;">저 장</i></div>
<div class="mb" style="left:1590px"></div>
<div class="t mbt" style="left:1410.3px;width:400px;text-align:center;top:520px;"><i style="letter-spacing:-0.26px;margin-right:0.26px;">닫기</i></div>
</body></html>
